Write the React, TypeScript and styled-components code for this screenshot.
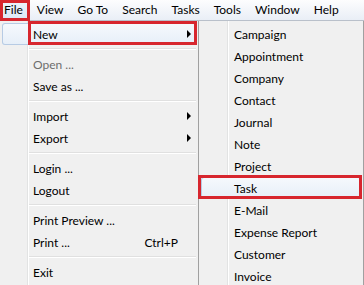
import React from 'react';
import styled, { createGlobalStyle, css } from 'styled-components';

const GlobalStyle = createGlobalStyle`
  body {
    margin: 0;
    background: #f0f0f0;
    font-family: Lato, "Liberation Sans", sans-serif;
    font-size: 12px;
    color: #000;
  }
`;

const RED = '#d7262e';

const Screen = styled.div`
  width: 364px;
  height: 285px;
  overflow: hidden;
  display: flex;
  flex-direction: column;
`;

const MenuBar = styled.div`
  display: flex;
  height: 20px;
  flex-shrink: 0;
  background: linear-gradient(#fdfdfe, #e9eef6);
  border-bottom: 1px solid #b9c0ca;
`;

const BarItem = styled.div<{ $marked?: boolean }>`
  position: relative;
  padding: 0 7px;
  line-height: 20px;
  white-space: nowrap;

  &:first-child {
    padding-left: 4px;
  }

  ${(p) =>
    p.$marked &&
    css`
      background: linear-gradient(#eef4fb, #dce8f6);
      &::after {
        content: '';
        position: absolute;
        inset: 0 0 -1px 0;
        border: 3px solid ${RED};
      }
    `}
`;

const Panels = styled.div`
  display: flex;
  flex: 1;
  min-height: 0;
`;

const Menu = styled.div<{ $width?: number; $gutter: number }>`
  position: relative;
  ${(p) => (p.$width ? `width: ${p.$width}px;` : 'flex: 1;')}
  flex-shrink: 0;
  padding: 2px 0;
  background-color: #f0f0f0;
  background-image: linear-gradient(
    to right,
    transparent ${(p) => p.$gutter}px,
    #e2e3e3 ${(p) => p.$gutter}px,
    #e2e3e3 ${(p) => p.$gutter + 1}px,
    #ffffff ${(p) => p.$gutter + 1}px,
    #ffffff ${(p) => p.$gutter + 2}px,
    transparent ${(p) => p.$gutter + 2}px
  );
  border-right: 1px solid #a0a0a0;
`;

const Row = styled.div<{ $indent: number; $hot?: boolean; $marked?: boolean; $disabled?: boolean; $markLeft?: number }>`
  position: relative;
  display: flex;
  align-items: center;
  height: 22px;
  margin: 0 2px;
  padding-left: ${(p) => p.$indent}px;
  white-space: nowrap;
  color: ${(p) => (p.$disabled ? '#6d6d6d' : '#000')};
  border-radius: 3px;

  ${(p) =>
    p.$hot &&
    css`
      background: linear-gradient(#f6f9fd, #e6eef8);
      box-shadow: inset 0 0 0 1px #b7cbe4;
    `}

  ${(p) =>
    p.$marked &&
    css`
      &::after {
        content: '';
        position: absolute;
        top: -2px;
        bottom: 0;
        left: ${p.$markLeft ?? 0}px;
        right: -1px;
        border: 3px solid ${RED};
      }
    `}
`;

const Label = styled.span`
  flex: 1;
`;

const Shortcut = styled.span`
  padding-right: 4px;
`;

const Trailing = styled.span`
  width: 14px;
  display: flex;
  justify-content: flex-start;
  padding-left: 5px;
  box-sizing: border-box;
`;

const Arrow = styled.span`
  width: 0;
  height: 0;
  border-left: 4px solid #000;
  border-top: 4px solid transparent;
  border-bottom: 4px solid transparent;
`;

const Separator = styled.div<{ $indent: number }>`
  height: 0;
  margin: 3px 2px 3px ${(p) => p.$indent}px;
  border-top: 1px solid #e0e0e0;
  border-bottom: 1px solid #ffffff;
`;

type Entry =
  | { sep: true }
  | { label: string; shortcut?: string; sub?: boolean; disabled?: boolean; hot?: boolean; marked?: boolean };

const fileEntries: Entry[] = [
  { label: 'New', sub: true, hot: true, marked: true },
  { sep: true },
  { label: 'Open ...', disabled: true },
  { label: 'Save as ...' },
  { sep: true },
  { label: 'Import', sub: true },
  { label: 'Export', sub: true },
  { sep: true },
  { label: 'Login ...' },
  { label: 'Logout' },
  { sep: true },
  { label: 'Print Preview ...' },
  { label: 'Print ...', shortcut: 'Ctrl+P' },
  { sep: true },
  { label: 'Exit' },
];

const newEntries: Entry[] = [
  { label: 'Campaign' },
  { label: 'Appointment' },
  { label: 'Company' },
  { label: 'Contact' },
  { label: 'Journal' },
  { label: 'Note' },
  { label: 'Project' },
  { label: 'Task', hot: true, marked: true },
  { label: 'E-Mail' },
  { label: 'Expense Report' },
  { label: 'Customer' },
  { label: 'Invoice' },
];

const MenuList: React.FC<{ entries: Entry[]; indent: number; gutter: number; width?: number; markLeft: number }> = ({
  entries,
  indent,
  gutter,
  width,
  markLeft,
}) => (
  <Menu $width={width} $gutter={gutter}>
    {entries.map((e, i) =>
      'sep' in e ? (
        <Separator key={i} $indent={gutter + 2} />
      ) : (
        <Row
          key={i}
          $indent={indent}
          $hot={e.hot}
          $marked={e.marked}
          $disabled={e.disabled}
          $markLeft={markLeft}
        >
          <Label>{e.label}</Label>
          {e.shortcut && <Shortcut>{e.shortcut}</Shortcut>}
          <Trailing>{e.sub && <Arrow />}</Trailing>
        </Row>
      )
    )}
  </Menu>
);

const barItems = ['File', 'View', 'Go To', 'Search', 'Tasks', 'Tools', 'Window', 'Help'];

export default function App() {
  return (
    <>
      <GlobalStyle />
      <Screen>
        <MenuBar>
          {barItems.map((b, i) => (
            <BarItem key={b} $marked={i === 0}>
              {b}
            </BarItem>
          ))}
        </MenuBar>
        <Panels>
          <MenuList entries={fileEntries} indent={31} gutter={27} width={198} markLeft={26} />
          <MenuList entries={newEntries} indent={33} gutter={28} markLeft={-3} />
        </Panels>
      </Screen>
    </>
  );
}
